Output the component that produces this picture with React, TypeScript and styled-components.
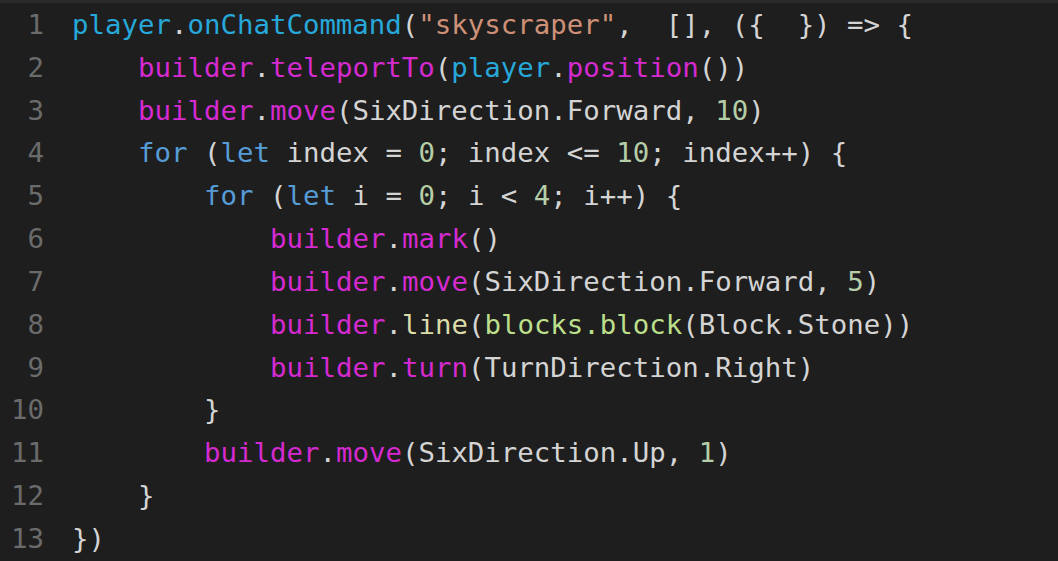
import React from "react";
import styled, { createGlobalStyle } from "styled-components";

const Global = createGlobalStyle`
  html, body { margin: 0; padding: 0; background: #1e1e1e; }
  body { width: 1058px; height: 561px; overflow: hidden; }
`;

type Kind = "plain" | "fn" | "mag" | "str" | "num" | "kw" | "yel" | "grn";

const palette: Record<Kind, string> = {
  plain: "#d4d4d4",
  fn: "#27a8da",
  mag: "#d42ad0",
  str: "#ce9178",
  num: "#b5cea8",
  kw: "#569cd6",
  yel: "#dcdcaa",
  grn: "#bcdf8c",
};

const Editor = styled.div`
  width: 1058px;
  height: 561px;
  background: #1e1e1e;
  border-top: 3px solid #2b2b2b;
  box-sizing: border-box;
  display: flex;
  flex-direction: column;
  font-family: "DejaVu Sans Mono", "Liberation Mono", monospace;
  font-size: 27.4px;
  overflow: hidden;
`;

const Row = styled.div`
  display: flex;
  align-items: center;
  height: 42.83px;
  flex: none;
`;

const Gutter = styled.span`
  width: 44px;
  text-align: right;
  color: #6b6b6b;
  flex: none;
`;

const Code = styled.span<{ $indent: number }>`
  margin-left: 28px;
  padding-left: ${(p) => p.$indent * 16.5}px;
  white-space: pre;
  color: ${palette.plain};
`;

const Tok = styled.span<{ $kind: Kind }>`
  color: ${(p) => palette[p.$kind]};
`;

type T = [Kind, string];
const lines: { indent: number; toks: T[] }[] = [
  {
    indent: 0,
    toks: [
      ["fn", "player"], ["plain", "."], ["fn", "onChatCommand"], ["plain", "("],
      ["str", '"skyscraper"'], ["plain", ",  [], ({  }) => {"],
    ],
  },
  {
    indent: 4,
    toks: [
      ["mag", "builder"], ["plain", "."], ["mag", "teleportTo"], ["plain", "("],
      ["fn", "player"], ["plain", "."], ["mag", "position"], ["plain", "())"],
    ],
  },
  {
    indent: 4,
    toks: [
      ["mag", "builder"], ["plain", "."], ["mag", "move"],
      ["plain", "(SixDirection.Forward, "], ["num", "10"], ["plain", ")"],
    ],
  },
  {
    indent: 4,
    toks: [
      ["kw", "for"], ["plain", " ("], ["kw", "let"], ["plain", " index = "],
      ["num", "0"], ["plain", "; index <= "], ["num", "10"], ["plain", "; index++) {"],
    ],
  },
  {
    indent: 8,
    toks: [
      ["kw", "for"], ["plain", " ("], ["kw", "let"], ["plain", " i = "],
      ["num", "0"], ["plain", "; i < "], ["num", "4"], ["plain", "; i++) {"],
    ],
  },
  { indent: 12, toks: [["mag", "builder"], ["plain", "."], ["mag", "mark"], ["plain", "()"]] },
  {
    indent: 12,
    toks: [
      ["mag", "builder"], ["plain", "."], ["mag", "move"],
      ["plain", "(SixDirection.Forward, "], ["num", "5"], ["plain", ")"],
    ],
  },
  {
    indent: 12,
    toks: [
      ["mag", "builder"], ["plain", "."], ["yel", "line"], ["plain", "("],
      ["grn", "blocks.block"], ["plain", "(Block.Stone))"],
    ],
  },
  {
    indent: 12,
    toks: [
      ["mag", "builder"], ["plain", "."], ["mag", "turn"], ["plain", "(TurnDirection.Right)"],
    ],
  },
  { indent: 8, toks: [["plain", "}"]] },
  {
    indent: 8,
    toks: [
      ["mag", "builder"], ["plain", "."], ["mag", "move"],
      ["plain", "(SixDirection.Up, "], ["num", "1"], ["plain", ")"],
    ],
  },
  { indent: 4, toks: [["plain", "}"]] },
  { indent: 0, toks: [["plain", "})"]] },
];

export default function App() {
  return (
    <>
      <Global />
      <Editor>
        {lines.map((l, i) => (
          <Row key={i}>
            <Gutter>{i + 1}</Gutter>
            <Code $indent={l.indent}>
              {l.toks.map(([k, s], j) => (
                <Tok key={j} $kind={k}>
                  {s}
                </Tok>
              ))}
            </Code>
          </Row>
        ))}
      </Editor>
    </>
  );
}
